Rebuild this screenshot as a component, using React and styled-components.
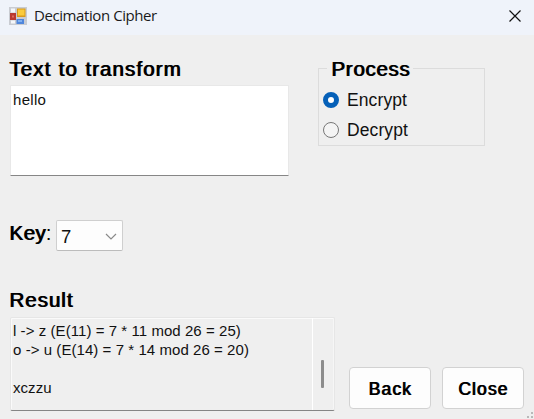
import React from "react";
import styled, { createGlobalStyle } from "styled-components";

const GlobalStyle = createGlobalStyle`
  * { box-sizing: border-box; }
  body {
    margin: 0;
    overflow: hidden;
    background: #efefef;
    color: #111;
    font-family: "Liberation Sans", Arial, sans-serif;
  }
`;

const Dialog = styled.main`
  position: relative;
  width: 534px;
  height: 419px;
  background: #efefef;
  overflow: hidden;
`;

const TitleBar = styled.header`
  display: flex;
  align-items: center;
  height: 35px;
  padding: 0 12px 3px 9px;
  background: #eff3fa;
`;

const Title = styled.h1`
  flex: 1;
  margin: -2px 0 0 7px;
  font: 400 15px/20px "Open Sans", sans-serif;
  letter-spacing: -0.42px;
  color: #1a1a1a;
  white-space: nowrap;
`;

const Body = styled.div`
  display: flex;
  flex-direction: column;
  padding: 22px 8px 0 10px;
`;

const TopRow = styled.div`
  display: flex;
  gap: 30px;
  height: 119px;
`;

const Heading = styled.div`
  margin-left: ${(p) => p.$shift || "-1px"};
  font-size: 20.5px;
  line-height: 24px;
  letter-spacing: ${(p) => p.$spacing || "1.1px"};
  word-spacing: 0.5px;
  white-space: nowrap;
  color: #000;
  text-shadow: 1px 0 0 #000;
`;

const TextBox = styled.div`
  width: 279px;
  height: 91px;
  margin-top: 4px;
  padding: 4px 2px;
  border: 1px solid #e8e8e8;
  border-bottom: 1px solid #868686;
  border-radius: 1px;
  background: #fff;
  font-size: 15px;
  line-height: 19px;
  letter-spacing: 0.3px;
`;

const GroupBox = styled.fieldset`
  width: 167px;
  height: 90px;
  margin: -1px 0 0 -1px;
  padding: 0;
  border: 1px solid #dcdcdc;
`;

const Legend = styled.legend`
  margin-left: 8px;
  padding: 1px 3px 0 4px;
`;

const Options = styled.div`
  padding-top: 4px;
`;

const Option = styled.div`
  display: flex;
  align-items: center;
  gap: 8px;
  height: 30px;
  padding-left: 4px;
  font-size: 17.5px;
  letter-spacing: 0.1px;
`;

const OptionText = styled.span`
  padding-top: 1px;
`;

const Radio = styled.span`
  width: 16px;
  height: 16px;
  border-radius: 50%;
  border: ${(p) => (p.$on ? "5px solid #0560b8" : "1px solid #777")};
  background: ${(p) => (p.$on ? "#fff" : "#f4f4f4")};
`;

const KeyRow = styled.div`
  display: flex;
  height: 31px;
  margin-top: 44px;
`;

const KeyLabel = styled.div`
  width: 46px;
  padding-top: 1px;
`;

const Colon = styled.span`
  text-shadow: none;
`;

const Select = styled.div`
  display: flex;
  align-items: center;
  justify-content: space-between;
  width: 67px;
  height: 31px;
  padding: 2px 5px 0 4px;
  border: 1px solid #cfcfcf;
  border-bottom-color: #bcbcbc;
  border-radius: 2px;
  background: #fdfdfd;
  font-size: 18.5px;
`;

const ResultHeading = styled(Heading)`
  margin-top: 37px;
`;

const BottomRow = styled.div`
  display: flex;
  align-items: flex-start;
  margin-top: 5px;
`;

const Output = styled.div`
  display: flex;
  width: 325px;
  height: 94px;
  border: 1px solid #e6e6e6;
  border-bottom-color: #858585;
  border-radius: 2px;
  box-shadow: inset 1px 1px #fafafa, inset -1px 0 #f6f6f6;
`;

const OutputText = styled.div`
  width: 302px;
  padding: 3px 0 0 2px;
  border-right: 1px solid #fff;
  font-size: 15px;
  line-height: 19px;
  letter-spacing: 0.06px;
  white-space: pre;
`;

const Thumb = styled.div`
  width: 3px;
  height: 28px;
  margin: 42px 0 0 8px;
  border-radius: 1px;
  background: #8c8c8c;
`;

const Button = styled.button`
  width: 82px;
  height: 42px;
  margin: 50px 0 0 ${(p) => p.$gap};
  padding: 2px 0 0;
  border: 1px solid #d2d2d2;
  border-radius: 4px;
  background: #fdfdfd;
  font: 400 17.5px "Liberation Sans", Arial, sans-serif;
  letter-spacing: 1.1px;
  color: #000;
  text-shadow: 1px 0 0 #000;
`;

const ResizeGrip = styled.svg`
  position: absolute;
  right: 0;
  bottom: 0;
`;

function AppIcon() {
  return (
    <svg width="18" height="18" viewBox="0 0 18 18">
      <rect width="18" height="18" fill="#c9ccd2" />
      <rect x="2" y="1.5" width="4" height="4" fill="#f5f7fa" />
      <rect x="2" y="13.5" width="4" height="3" fill="#f5f7fa" />
      <rect x="1" y="6" width="6" height="7" fill="#b93a30" />
      <rect x="3" y="8.5" width="2" height="2" fill="#dd6a5c" />
      <rect x="8" y="1.5" width="8.5" height="8.5" fill="#d99b1c" />
      <rect x="9" y="2.5" width="6.5" height="6" fill="#fbcb3c" />
      <rect x="7.5" y="12" width="7.5" height="5" fill="#4f86dc" />
      <rect x="9" y="13" width="4" height="2" fill="#80b0f0" />
    </svg>
  );
}

function CloseIcon() {
  return (
    <svg width="13" height="13" viewBox="0 0 13 13">
      <path d="M0.5 0.5L11.5 11.5M11.5 0.5L0.5 11.5" stroke="#111" strokeWidth="1.2" />
    </svg>
  );
}

export default function App() {
  return (
    <Dialog>
      <GlobalStyle />
      <TitleBar>
        <AppIcon />
        <Title>Decimation Cipher</Title>
        <CloseIcon />
      </TitleBar>
      <Body>
        <TopRow>
          <div>
            <Heading>Text to transform</Heading>
            <TextBox>hello</TextBox>
          </div>
          <GroupBox>
            <Legend>
              <Heading as="span" $spacing="0.7px" $shift="0">Process</Heading>
            </Legend>
            <Options>
              <Option><Radio $on /><OptionText>Encrypt</OptionText></Option>
              <Option><Radio /><OptionText>Decrypt</OptionText></Option>
            </Options>
          </GroupBox>
        </TopRow>
        <KeyRow>
          <KeyLabel>
            <Heading $spacing="0.5px">Key<Colon>:</Colon></Heading>
          </KeyLabel>
          <Select>
            7
            <svg width="12" height="8" viewBox="0 0 12 8">
              <path d="M1 1L6 6L11 1" fill="none" stroke="#8a8a8a" strokeWidth="1.2" />
            </svg>
          </Select>
        </KeyRow>
        <ResultHeading $spacing="1px">Result</ResultHeading>
        <BottomRow>
          <Output>
            <OutputText>{"l -> z (E(11) = 7 * 11 mod 26 = 25)\no -> u (E(14) = 7 * 14 mod 26 = 20)\n\nxczzu"}</OutputText>
            <Thumb />
          </Output>
          <Button $gap="14px">Back</Button>
          <Button $gap="11px">Close</Button>
        </BottomRow>
      </Body>
      <ResizeGrip width="8" height="8" viewBox="0 0 8 8" fill="#b9b9b9">
        <rect x="5" y="1" width="2" height="2" />
        <rect x="1" y="5" width="2" height="2" />
        <rect x="5" y="5" width="2" height="2" />
      </ResizeGrip>
    </Dialog>
  );
}
